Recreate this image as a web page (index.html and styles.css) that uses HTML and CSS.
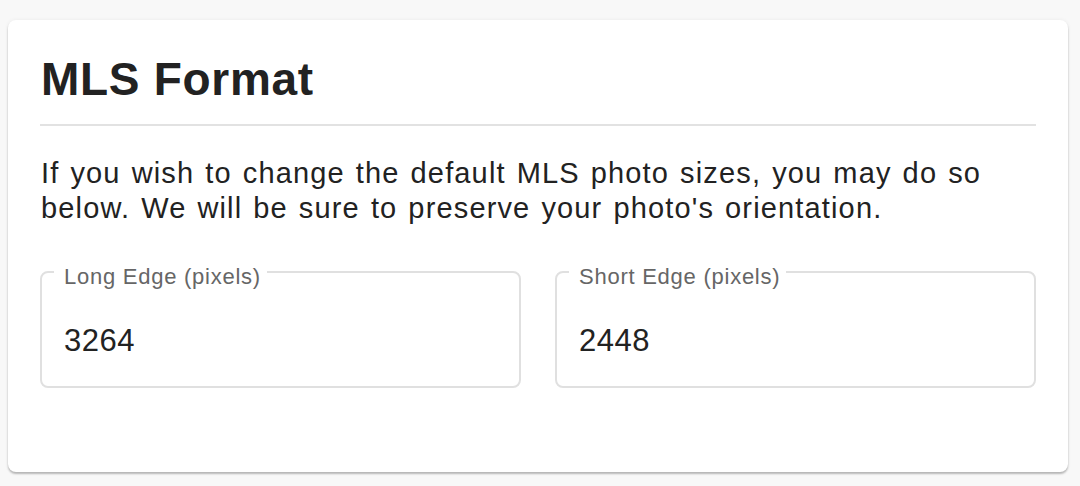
FILE: index.html
```html
<!DOCTYPE html>
<html>
<head>
<meta charset="utf-8">
<link rel="stylesheet" href="styles.css">
</head>
<body>
<div class="card">
  <h1 class="title">MLS Format</h1>
  <div class="divider"></div>
  <p class="intro">If you wish to change the default MLS photo sizes, you may do so below. We will be sure to preserve your photo's orientation.</p>
  <div class="fields">
    <div class="field">
      <span class="label">Long Edge (pixels)</span>
      <div class="value">3264</div>
    </div>
    <div class="field">
      <span class="label">Short Edge (pixels)</span>
      <div class="value">2448</div>
    </div>
  </div>
</div>
</body>
</html>
```
FILE: styles.css
```css
html, body {
  margin: 0;
  padding: 0;
  background: #f8f8f8;
  font-family: "Liberation Sans", Arial, Helvetica, sans-serif;
  color: #222;
}
body {
  padding: 20px 12px 14px 8px;
}
.card {
  background: #fff;
  border-radius: 8px;
  box-shadow: 0 2px 2px rgba(0,0,0,0.25), 0 0 4px rgba(0,0,0,0.06);
  padding: 32px 32px 84px 32px;
}
.title {
  margin: 0 0 0 1px;
  font-size: 46px;
  line-height: 55px;
  font-weight: 700;
  letter-spacing: 0.7px;
  color: #222;
}
.divider {
  height: 2px;
  background: #e2e2e2;
  margin-top: 17px;
}
.intro {
  margin: 30px 0 0 1px;
  font-size: 29px;
  line-height: 35px;
  letter-spacing: 1.15px;
  word-spacing: 1.8px;
}
.fields {
  display: grid;
  grid-template-columns: 1fr 1fr;
  gap: 34px;
  margin-top: 45px;
}
.field {
  position: relative;
  border: 2px solid #e0e0e0;
  border-radius: 8px;
  height: 113px;
  box-sizing: content-box;
  padding: 0 22px;
}
.label {
  position: absolute;
  left: 12px;
  top: -9px;
  padding: 0 6px 0 10px;
  background: #fff;
  font-size: 22px;
  line-height: 26px;
  letter-spacing: 0.75px;
  color: #666;
}
.value {
  padding-top: 50px;
  font-size: 31px;
  line-height: 36px;
  letter-spacing: 0.5px;
  color: #222;
}
```
